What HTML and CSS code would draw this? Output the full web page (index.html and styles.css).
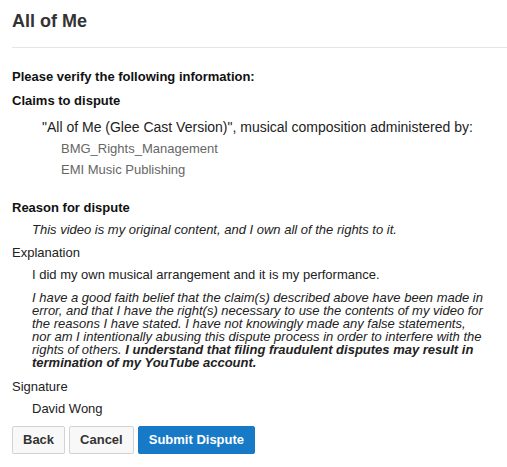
FILE: index.html
```html
<!DOCTYPE html>
<html>
<head>
<meta charset="utf-8">
<title>All of Me</title>
<link rel="stylesheet" href="styles.css">
</head>
<body>
<div class="page">
  <header class="header">
    <h1 class="title">All of Me</h1>
  </header>
  <main class="content">
    <h3 class="heading verify">Please verify the following information:</h3>
    <h4 class="heading claims">Claims to dispute</h4>
    <div class="claim">
      <div class="claim-title">"All of Me (Glee Cast Version)", musical composition administered by:</div>
      <ul class="owners">
        <li>BMG_Rights_Management</li>
        <li>EMI Music Publishing</li>
      </ul>
    </div>
    <h4 class="heading reason">Reason for dispute</h4>
    <p class="value italic">This video is my original content, and I own all of the rights to it.</p>
    <div class="label">Explanation</div>
    <p class="value">I did my own musical arrangement and it is my performance.</p>
    <p class="statement">I have a good faith belief that the claim(s) described above have been made in<br>error, and that I have the right(s) necessary to use the contents of my video for<br>the reasons I have stated. I have not knowingly made any false statements,<br>nor am I intentionally abusing this dispute process in order to interfere with the<br>rights of others. <b>I understand that filing fraudulent disputes may result in<br>termination of my YouTube account.</b></p>
    <div class="label">Signature</div>
    <p class="value">David Wong</p>
    <div class="actions">
      <button class="btn">Back</button>
      <button class="btn">Cancel</button>
      <button class="btn btn-primary">Submit Dispute</button>
    </div>
  </main>
</div>
</body>
</html>
```
FILE: styles.css
```css
html, body {
  margin: 0;
  padding: 0;
  background: #fff;
}
body {
  font-family: "Liberation Sans", Arial, sans-serif;
  font-size: 13px;
  color: #222;
}
.page {
  padding-left: 12px;
}
.header {
  padding: 9px 0 14px;
  border-bottom: 1px solid #e5e5e5;
}
.title {
  margin: 0;
  font-size: 18px;
  line-height: 24px;
  font-weight: bold;
  color: #333;
}
.content {
  padding-right: 12px;
}
.heading {
  margin: 0;
  font-size: 13px;
  line-height: 17px;
  font-weight: bold;
  color: #111;
}
.verify {
  margin-top: 20px;
}
.claims {
  margin-top: 7px;
}
.claim {
  margin-top: 8px;
  padding-left: 30px;
}
.claim-title {
  font-size: 14px;
  line-height: 21px;
}
.owners {
  list-style: none;
  margin: 0;
  padding: 0 0 0 19px;
  line-height: 21px;
  color: #666;
}
.reason {
  margin-top: 18.5px;
}
.value {
  margin: 5.5px 0 0;
  padding-left: 20px;
  line-height: 17px;
}
.italic {
  font-style: italic;
}
.label {
  margin-top: 5.6px;
  line-height: 17px;
}
.statement {
  margin: 8.4px 0 0;
  padding-left: 20px;
  font-style: italic;
  line-height: 13px;
}
.statement + .label {
  margin-top: 8.3px;
}
.actions {
  display: flex;
  gap: 4px;
  margin-top: 8.7px;
}
.btn {
  height: 28px;
  padding: 0 10px;
  border: 1px solid #d3d3d3;
  border-radius: 2px;
  background: #f8f8f8;
  color: #333;
  font-family: "Liberation Sans", Arial, sans-serif;
  font-size: 13px;
  font-weight: bold;
  box-shadow: 0 1px 0 rgba(0, 0, 0, 0.05);
  cursor: pointer;
}
.btn-primary {
  background: #167ac6;
  border-color: #167ac6;
  color: #fff;
}
```
